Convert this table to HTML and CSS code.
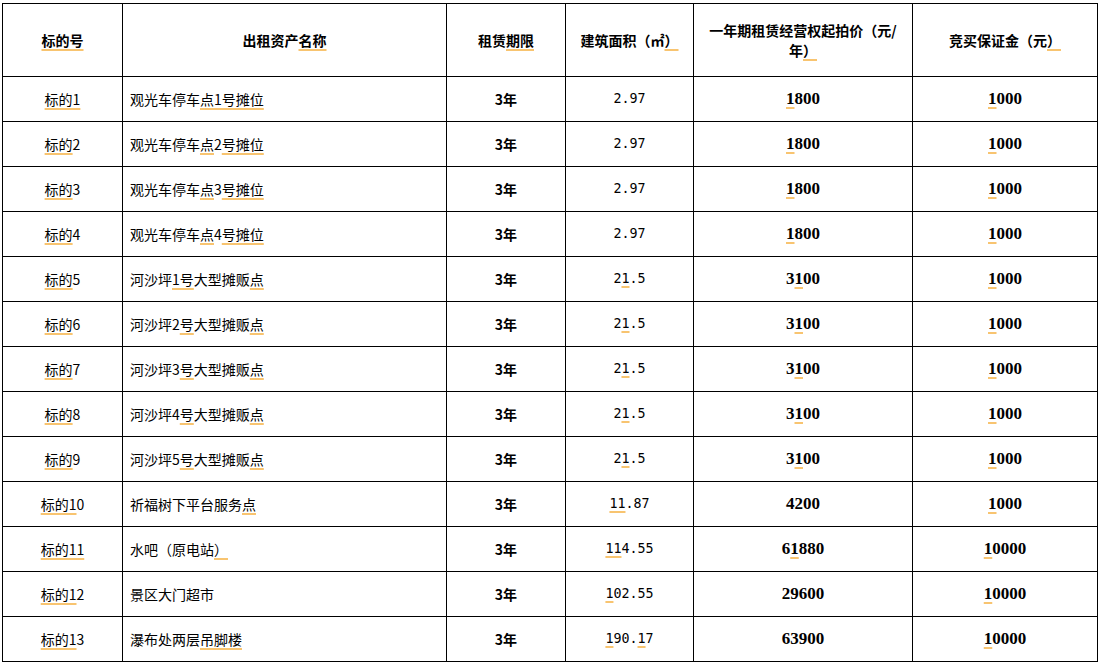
FILE: index.html
```html
<!DOCTYPE html>
<html lang="zh-CN">
<head>
<meta charset="utf-8">
<title>租赁标的</title>
<link rel="stylesheet" href="styles.css">
</head>
<body>
<table class="grid">
  <colgroup>
    <col class="c1"><col class="c2"><col class="c3"><col class="c4"><col class="c5"><col class="c6">
  </colgroup>
  <thead>
    <tr class="head">
      <th><span class="u">标的号</span></th>
      <th>出租资产<span class="u">名称</span></th>
      <th>租赁<span class="u">期限</span></th>
      <th>建筑面积（㎡<span class="u">）</span></th>
      <th class="wrap">一年期租赁经营权起拍价（元/<br>年<span class="u">）</span></th>
      <th>竞买保证金（元<span class="u">）</span></th>
    </tr>
  </thead>
  <tbody>
    <tr><td><span class="u">标的1</span></td><td class="name">观光车停车<span class="u">点</span><span class="u">1号摊位</span></td><td class="term">3年</td><td class="area">2.97</td><td class="num"><span class="u">1</span>800</td><td class="num"><span class="u">1</span>000</td></tr>
    <tr><td><span class="u">标的</span>2</td><td class="name">观光车停车<span class="u">点</span>2<span class="u">号摊位</span></td><td class="term">3年</td><td class="area">2.97</td><td class="num"><span class="u">1</span>800</td><td class="num"><span class="u">1</span>000</td></tr>
    <tr><td><span class="u">标的</span>3</td><td class="name">观光车停车<span class="u">点</span>3<span class="u">号摊位</span></td><td class="term">3年</td><td class="area">2.97</td><td class="num"><span class="u">1</span>800</td><td class="num"><span class="u">1</span>000</td></tr>
    <tr><td><span class="u">标的</span>4</td><td class="name">观光车停车<span class="u">点</span>4<span class="u">号摊位</span></td><td class="term">3年</td><td class="area">2.97</td><td class="num"><span class="u">1</span>800</td><td class="num"><span class="u">1</span>000</td></tr>
    <tr><td><span class="u">标的</span>5</td><td class="name">河沙坪<span class="u">1号</span>大型摊贩<span class="u">点</span></td><td class="term">3年</td><td class="area">2<span class="u">1</span>.5</td><td class="num">3<span class="u">1</span>00</td><td class="num"><span class="u">1</span>000</td></tr>
    <tr><td><span class="u">标的</span>6</td><td class="name">河沙坪2<span class="u">号</span>大型摊贩<span class="u">点</span></td><td class="term">3年</td><td class="area">2<span class="u">1</span>.5</td><td class="num">3<span class="u">1</span>00</td><td class="num"><span class="u">1</span>000</td></tr>
    <tr><td><span class="u">标的</span>7</td><td class="name">河沙坪3<span class="u">号</span>大型摊贩<span class="u">点</span></td><td class="term">3年</td><td class="area">2<span class="u">1</span>.5</td><td class="num">3<span class="u">1</span>00</td><td class="num"><span class="u">1</span>000</td></tr>
    <tr><td><span class="u">标的</span>8</td><td class="name">河沙坪4<span class="u">号</span>大型摊贩<span class="u">点</span></td><td class="term">3年</td><td class="area">2<span class="u">1</span>.5</td><td class="num">3<span class="u">1</span>00</td><td class="num"><span class="u">1</span>000</td></tr>
    <tr><td><span class="u">标的</span>9</td><td class="name">河沙坪5<span class="u">号</span>大型摊贩<span class="u">点</span></td><td class="term">3年</td><td class="area">2<span class="u">1</span>.5</td><td class="num">3<span class="u">1</span>00</td><td class="num"><span class="u">1</span>000</td></tr>
    <tr><td><span class="u">标的1</span>0</td><td class="name">祈福树下平台服务<span class="u">点</span></td><td class="term">3年</td><td class="area"><span class="u">11</span>.87</td><td class="num">4200</td><td class="num"><span class="u">1</span>000</td></tr>
    <tr><td><span class="u">标的11</span></td><td class="name">水吧（原电站<span class="u">）</span></td><td class="term">3年</td><td class="area"><span class="u">11</span>4.55</td><td class="num">6<span class="u">1</span>880</td><td class="num"><span class="u">1</span>0000</td></tr>
    <tr><td><span class="u">标的1</span>2</td><td class="name">景区大门超市</td><td class="term">3年</td><td class="area"><span class="u">1</span>02.55</td><td class="num">29600</td><td class="num"><span class="u">1</span>0000</td></tr>
    <tr><td><span class="u">标的1</span>3</td><td class="name">瀑布处两层<span class="u">吊脚楼</span></td><td class="term">3年</td><td class="area"><span class="u">1</span>90.<span class="u">1</span>7</td><td class="num">63900</td><td class="num"><span class="u">1</span>0000</td></tr>
  </tbody>
</table>
</body>
</html>
```
FILE: styles.css
```css
html, body {
  margin: 0;
  padding: 0;
  background: #fff;
}
body {
  padding: 3px 0 0 2px;
  font-family: "Noto Sans CJK SC", "Noto Sans", sans-serif;
  font-size: 14px;
  color: #000;
}
.grid {
  border-collapse: collapse;
  table-layout: fixed;
  width: 1095px;
}
.c1 { width: 120px; }
.c2 { width: 324px; }
.c3 { width: 119px; }
.c4 { width: 128px; }
.c5 { width: 219px; }
.c6 { width: 185px; }
.grid th, .grid td {
  border: 1px solid #000;
  padding: 0;
  text-align: center;
  vertical-align: middle;
  line-height: 20px;
}
.grid th {
  font-weight: 700;
}
.head {
  height: 73px;
}
.wrap {
  line-height: 23px;
}
.grid tbody tr {
  height: 45px;
}
.grid td.name {
  text-align: left;
  padding-left: 7px;
}
.grid td.term {
  font-weight: 700;
}
.grid td.area {
  font-family: "DejaVu Sans Mono", "Liberation Mono", monospace;
  font-size: 13.33px;
}
.grid td.num {
  font-family: "Liberation Serif", "Times New Roman", serif;
  font-size: 17px;
  font-weight: 700;
}
.u {
  text-decoration: underline;
  text-decoration-color: #f8c470;
  text-decoration-thickness: 2px;
  text-underline-offset: 3px;
  text-decoration-skip-ink: none;
}
```
